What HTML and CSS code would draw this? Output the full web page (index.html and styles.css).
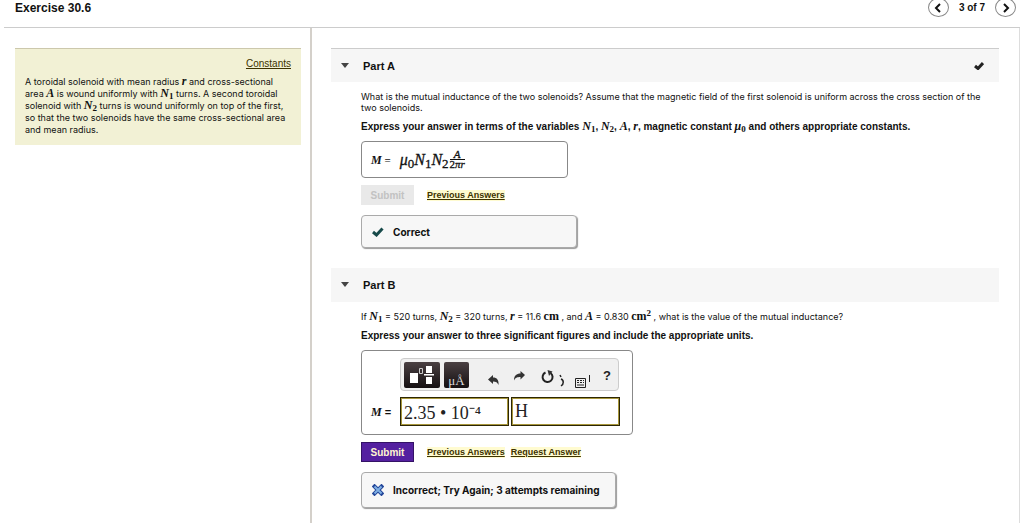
FILE: index.html
```html
<!DOCTYPE html>
<html lang="en">
<head>
<meta charset="utf-8">
<title>Exercise 30.6</title>
<link rel="stylesheet" href="styles.css">
</head>
<body>
<header class="topbar">
  <h1 class="title">Exercise 30.6</h1>
  <nav class="pager" aria-label="Items">
    <button class="round" type="button" aria-label="Previous item"><svg width="8" height="10" viewBox="0 0 8 10"><path d="M6 1L2 5l4 4"/></svg></button>
    <span>3 of 7</span>
    <button class="round" type="button" aria-label="Next item"><svg width="8" height="10" viewBox="0 0 8 10"><path d="M2 1l4 4-4 4"/></svg></button>
  </nav>
</header>
<div class="columns">
  <aside class="side">
    <div class="intro">
      <a class="link constants" href="#">Constants</a>
      <p class="text">A toroidal solenoid with mean radius <i class="m">r</i> and cross-sectional<br>area <i class="m">A</i> is wound uniformly with <i class="m">N</i><sub>1</sub> turns. A second toroidal<br>solenoid with <i class="m">N</i><sub>2</sub> turns is wound uniformly on top of the first,<br>so that the two solenoids have the same cross-sectional area<br>and mean radius.</p>
    </div>
  </aside>
  <main class="main">
    <section class="part">
      <div class="part-head lined">
        <svg class="caret" width="8" height="6" viewBox="0 0 8 6"><path d="M0 0h8L4 5z"/></svg>
        <h2 class="part-title">Part A</h2>
        <svg class="done" width="10" height="8" viewBox="0 0 10 8"><path d="M1 4l3 2.500L9 1"/></svg>
      </div>
      <div class="part-body">
        <p class="text">What is the mutual inductance of the two solenoids? Assume that the magnetic field of the first solenoid is uniform across the cross section of the two solenoids.</p>
        <p class="text strong">Express your answer in terms of the variables <i class="m">N</i><sub>1</sub>, <i class="m">N</i><sub>2</sub>, <i class="m">A</i>, <i class="m">r</i>, magnetic constant <i class="m">μ</i><sub>0</sub> and others appropriate constants.</p>
        <div class="answer solved">
          <span class="lhs"><i class="m">M</i> =</span>
          <span class="formula"><i>μ</i><sub>0</sub><i>N</i><sub>1</sub><i>N</i><sub>2</sub></span>
          <span class="frac"><i class="num">A</i><span>2<i>πr</i></span></span>
        </div>
        <div class="actions">
          <button class="submit" type="button" disabled>Submit</button>
          <a class="link" href="#">Previous Answers</a>
        </div>
        <div class="feedback correct">
          <svg width="12" height="10" viewBox="0 0 12 10"><path class="tick" d="M1 5l3.500 3L10.500 1.500"/></svg>
          <span>Correct</span>
        </div>
      </div>
    </section>
    <section class="part">
      <div class="part-head">
        <svg class="caret" width="8" height="6" viewBox="0 0 8 6"><path d="M0 0h8L4 5z"/></svg>
        <h2 class="part-title">Part B</h2>
      </div>
      <div class="part-body">
        <p class="text">If <i class="m">N</i><sub>1</sub> = 520 turns, <i class="m">N</i><sub>2</sub> = 320 turns, <i class="m">r</i> = 11.6 <b class="m">cm</b> , and <i class="m">A</i> = 0.830 <b class="m">cm</b><sup>2</sup> , what is the value of the mutual inductance?</p>
        <p class="text strong">Express your answer to three significant figures and include the appropriate units.</p>
        <div class="answer editor">
          <div class="toolbar">
            <button class="dark wide" type="button" aria-label="Templates"><svg width="36" height="26" viewBox="0 0 36 26"><path fill="#fff" d="M6 11h8v10H6zM22 4h6v7h-6zM22 15h6v7h-6zM20 12h10v1.500H20z"/><path fill="none" stroke="#ccc" d="M15.500 6.500h3v5h-3z"/></svg></button>
            <button class="dark units" type="button">μÅ</button>
            <button class="tool undo" type="button" aria-label="Undo"><svg width="12" height="12" viewBox="0 0 12 12"><path d="M0 5.500L5 1v2.500c4 0 6 2.500 5.500 7.500C9.500 8.500 8 7.500 5 7.500V10z"/></svg></button>
            <button class="tool redo" type="button" aria-label="Redo"><svg width="12" height="12" viewBox="0 0 12 12"><path d="M12 5L7.500 1v2.500C3.500 3.500 1 5.500 1 10.500 2.500 7.500 4 7 7.500 7v2.500z"/></svg></button>
            <button class="tool reset" type="button" aria-label="Reset"><svg width="26" height="18" viewBox="0 0 26 18"><path fill="none" stroke="#222" stroke-width="2" d="M5.500 2.500A5 5 0 1 0 10.500 3"/><path d="M7.500 0l5 1.500L9 6z"/><path fill="none" stroke="#222" stroke-width="1.500" d="M20 5l1 2M21 9c3 1 3 5 0 7"/></svg></button>
            <button class="tool keys" type="button" aria-label="Keyboard shortcuts"><svg width="16" height="14" viewBox="0 0 16 14"><path fill="none" stroke="#222" d="M.500 4.500h10v9H.500zM14.500 1v7"/><path fill="none" stroke="#222" stroke-dasharray="2 1" d="M2 6.500h7M2 8.500h7"/><path fill="none" stroke="#222" d="M2 11h7"/></svg></button>
            <button class="tool help" type="button">?</button>
          </div>
          <div class="entry">
            <label class="lhs" for="value"><i class="m">M</i> =</label>
            <input class="field" id="value" type="text" value="2.35 • 10⁻⁴">
            <input class="field" type="text" value="H" aria-label="Units">
          </div>
        </div>
        <div class="actions">
          <button class="submit active" type="button">Submit</button>
          <a class="link" href="#">Previous Answers</a>
          <a class="link second" href="#">Request Answer</a>
        </div>
        <div class="feedback wrong">
          <svg width="12" height="12" viewBox="0 0 12 12"><path class="cross-edge" d="M2.500 2.500l7 7M9.500 2.500l-7 7"/><path class="cross" d="M2.500 2.500l7 7M9.500 2.500l-7 7"/></svg>
          <span>Incorrect; Try Again; 3 attempts remaining</span>
        </div>
      </div>
    </section>
  </main>
</div>
</body>
</html>
```
FILE: styles.css
```css
* { box-sizing: border-box; }
html, body { height: 100%; }
body {
  margin: 0;
  display: flex;
  flex-direction: column;
  overflow: hidden;
  background: #fff;
  color: #111;
  font-family: "Liberation Sans", Arial, sans-serif;
  font-size: 11px;
}
h1, h2, p { margin: 0; }
button { font-family: inherit; padding: 0; border: 0; }
svg { display: block; flex: none; }
.topbar {
  display: flex;
  justify-content: space-between;
  align-items: center;
  flex: none;
  height: 28px;
  margin-left: 4px;
  padding: 0 4px 12px 11px;
  border-bottom: 1px solid #ccc;
}
.title { font-size: 12px; line-height: 16px; }
.pager { display: flex; align-items: center; gap: 10px; font-size: 10px; font-weight: bold; }
.round {
  display: flex;
  align-items: center;
  justify-content: center;
  width: 21px;
  height: 19px;
  border: 1px solid #888;
  border-radius: 50%;
  background: #fff;
}
.round path { fill: none; stroke: #111; stroke-width: 2; }
.columns { flex: 1; display: flex; min-height: 0; border-right: 1px solid #ddd; }
.side { flex: none; width: 312px; padding: 20px 9px 0 15px; border-right: 2px solid #d4d0ca; }
.intro {
  display: flex;
  flex-direction: column;
  padding: 9px 10px 9px 10px;
  border-top: 1px solid #ccc8ac;
  background: #f2f1d5;
}
.text { font-family: Inter, "Liberation Sans", sans-serif; font-size: 9px; line-height: 11px; }
.intro .text { margin-top: 7px; line-height: 12px; white-space: nowrap; }
.strong { font-family: "Liberation Sans", Arial, sans-serif; font-size: 10px; font-weight: bold; }
.m, sub, sup { font-family: "Liberation Serif", "Times New Roman", serif; font-weight: bold; line-height: 0; }
.m { font-size: 12px; }
sub, sup { font-size: 9px; }
sub { vertical-align: -2px; }
sup { vertical-align: 4px; }
.link {
  color: #3d3200;
  background: #fffbd0;
  font-size: 9px;
  font-weight: bold;
  line-height: 11px;
  text-decoration: underline;
}
.constants { align-self: flex-end; font-weight: normal; font-size: 10px; background: none; }
.main { flex: 1; min-width: 0; padding: 20px 20px 0 19px; }
.part { margin-bottom: 20px; }
.part-head {
  display: flex;
  align-items: center;
  height: 34px;
  padding: 0 15px 0 10px;
  background: #f6f6f6;
}
.lined { border-top: 1px solid #ccc; }
.caret { fill: #444; }
.part-title { margin-left: 14px; font-size: 11px; }
.done { margin-left: auto; }
.done path, .tick { fill: none; stroke: #222; stroke-width: 3; }
.tick { stroke: #174a4a; }
.part-body { padding: 9px 10px 0 30px; }
.part-body .strong { margin-top: 8px; }
.answer { margin-top: 9px; border: 1px solid #888; border-radius: 4px; background: #fff; }
.solved {
  display: flex;
  align-items: center;
  width: 207px;
  height: 37px;
  padding-left: 9px;
  font-family: "Liberation Serif", "Times New Roman", serif;
}
.lhs { font-weight: bold; font-size: 11px; white-space: nowrap; }
.formula { margin-left: 9px; font-size: 16px; -webkit-text-stroke: 0.3px #111; }
.formula sub { font-size: 13px; font-weight: normal; vertical-align: -3px; }
.frac { display: flex; flex-direction: column; align-items: center; margin-left: 1px; font-size: 11px; -webkit-text-stroke: 0.3px #111; line-height: 9px; }
.num { align-self: stretch; border-bottom: 1px solid #111; text-align: center; }
.actions { display: flex; align-items: center; margin-top: 7px; }
.submit {
  width: 53px;
  height: 20px;
  margin-right: 13px;
  background: #e9e9e9;
  color: #c2c2c2;
  font-size: 10px;
  font-weight: bold;
}
.active { background: #5420a0; color: #fff6d0; border: 1px solid #341266; }
.second { margin-left: 6px; }
.feedback {
  display: flex;
  align-items: center;
  height: 33px;
  margin-top: 10px;
  padding-left: 10px;
  gap: 9px;
  border: 1px solid #aaa;
  border-radius: 4px;
  background: #f7f7f7;
  box-shadow: 1px 1px 1px #999;
  font-family: Inter, "Liberation Sans", sans-serif;
  font-size: 10px;
  font-weight: bold;
}
.correct { width: 216px; }
.wrong { width: 255px; height: 36px; }
.cross-edge { stroke: #24479a; stroke-width: 4; stroke-linecap: square; }
.cross { stroke: #7fb0e4; stroke-width: 2; }
.editor { width: 272px; height: 85px; padding: 7px 9px 0; }
.toolbar {
  display: flex;
  align-items: flex-start;
  width: 219px;
  height: 33px;
  margin-left: 29px;
  padding: 3px 3px;
  border: 1px solid #ccc;
  border-radius: 4px;
  background: #f0f0f0;
}
.dark { height: 26px; border-radius: 2px; background: linear-gradient(#4a4042, #151012); color: #ddd; }
.wide { width: 36px; }
.units { width: 25px; margin-left: 4px; padding-top: 12px; font-family: "Liberation Serif", "Times New Roman", serif; font-size: 13px; line-height: 14px; overflow: hidden; }
.tool { background: none; fill: #333; color: #222; }
.undo { margin: 12px 0 0 19px; }
.redo { margin: 8px 0 0 13px; }
.reset { margin: 8px 0 0 15px; }
.keys { margin: 12px 0 0 9px; }
.help { margin: 7px 0 0 12px; font-size: 13px; font-weight: bold; line-height: 14px; }
.entry { display: flex; align-items: center; margin-top: 6px; }
.entry .lhs { width: 29px; }
.field {
  width: 109px;
  height: 29px;
  padding: 0 3px;
  border: 1px solid #2c2604;
  box-shadow: inset 0 0 0 1px #a8973c;
  background: #fff;
  color: #222;
  font-family: "Liberation Serif", "Times New Roman", serif;
  font-size: 18px;
}
.field + .field { margin-left: 2px; }
```
